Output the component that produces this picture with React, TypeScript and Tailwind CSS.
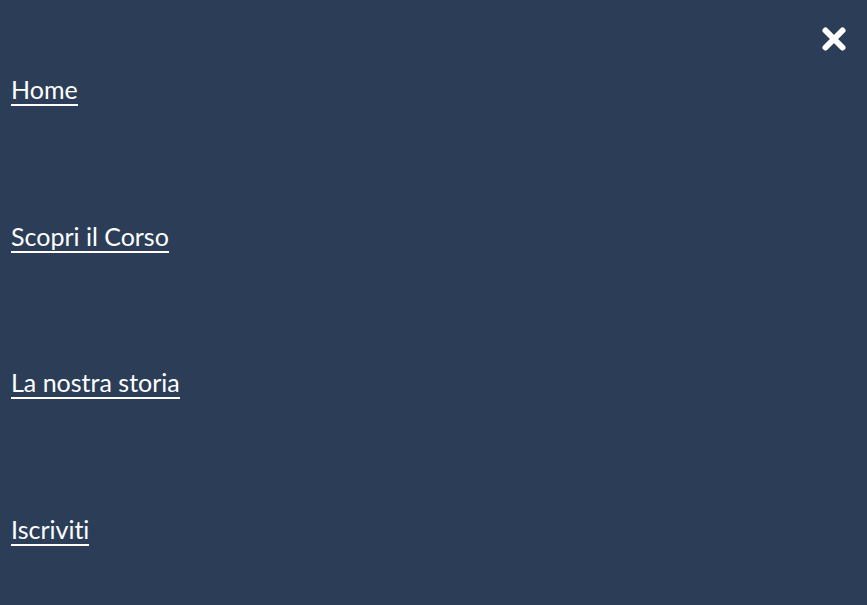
const links = ["Home", "Scopri il Corso", "La nostra storia", "Iscriviti"];

export default function App() {
  return (
    <div
      className="h-[605px] w-full overflow-hidden bg-[#2c3e57] text-white"
      style={{ fontFamily: "Lato, 'Open Sans', sans-serif" }}
    >
      <div className="flex justify-end pr-[19px] pt-[25px]">
        <button aria-label="Chiudi" className="block h-[28px] w-[28px]">
          <svg viewBox="0 0 28 28" className="h-[28px] w-[28px]">
            <path
              d="M5.5 5.5 L22.5 22.5 M22.5 5.5 L5.5 22.5"
              stroke="white"
              strokeWidth="6"
              strokeLinecap="round"
              fill="none"
            />
          </svg>
        </button>
      </div>
      <nav className="mt-[22px] flex flex-col items-start gap-[115.5px] pl-[11px]">
        {links.map((l) => (
          <a
            key={l}
            href="#"
            className="inline-block border-b-2 border-white text-[25px] leading-[29px] text-white [font-variant-ligatures:none]"
          >
            {l}
          </a>
        ))}
      </nav>
    </div>
  );
}
